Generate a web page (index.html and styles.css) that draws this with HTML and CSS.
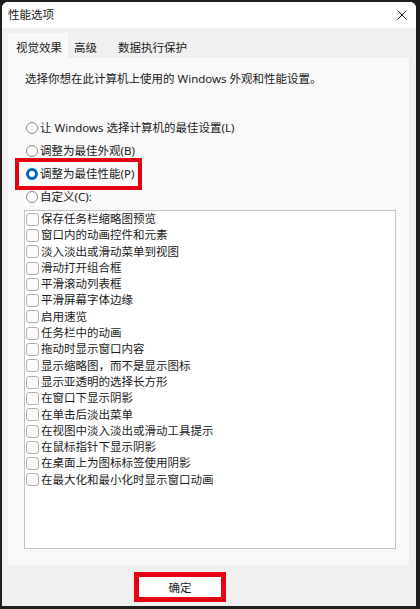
FILE: index.html
```html
<!DOCTYPE html>
<html lang="zh-CN">
<head>
    <meta charset="UTF-8">
    <meta name="viewport" content="width=device-width, initial-scale=1.0">
    <title>性能选项</title>
    <link rel="stylesheet" href="styles.css">
</head>
<body>
    <div class="window">
        <div class="titlebar">
            <span class="title">性能选项</span>
            <svg class="close" width="10" height="10" viewBox="0 0 10 10">
                <path d="M0.5 0.5 L9.5 9.5 M9.5 0.5 L0.5 9.5" stroke="#2b2b2b" stroke-width="1" fill="none"/>
            </svg>
        </div>
        <div class="tabs">
            <div class="tab active">视觉效果</div>
            <div class="tab second">高级</div>
            <div class="tab third">数据执行保护</div>
        </div>
        <div class="panel">
            <p class="intro">选择你想在此计算机上使用的 Windows 外观和性能设置。</p>
            <div class="options">
                <label class="option"><span class="radio"></span>让 Windows 选择计算机的最佳设置(L)</label>
                <label class="option"><span class="radio"></span>调整为最佳外观(B)</label>
                <label class="option marked"><span class="radio checked"></span>调整为最佳性能(P)</label>
                <label class="option"><span class="radio"></span>自定义(C):</label>
            </div>
            <ul class="effects">
                <li><span class="check"></span>保存任务栏缩略图预览</li>
                <li><span class="check"></span>窗口内的动画控件和元素</li>
                <li><span class="check"></span>淡入淡出或滑动菜单到视图</li>
                <li><span class="check"></span>滑动打开组合框</li>
                <li><span class="check"></span>平滑滚动列表框</li>
                <li><span class="check"></span>平滑屏幕字体边缘</li>
                <li><span class="check"></span>启用速览</li>
                <li><span class="check"></span>任务栏中的动画</li>
                <li><span class="check"></span>拖动时显示窗口内容</li>
                <li><span class="check"></span>显示缩略图，而不是显示图标</li>
                <li><span class="check"></span>显示亚透明的选择长方形</li>
                <li><span class="check"></span>在窗口下显示阴影</li>
                <li><span class="check"></span>在单击后淡出菜单</li>
                <li><span class="check"></span>在视图中淡入淡出或滑动工具提示</li>
                <li><span class="check"></span>在鼠标指针下显示阴影</li>
                <li><span class="check"></span>在桌面上为图标标签使用阴影</li>
                <li><span class="check"></span>在最大化和最小化时显示窗口动画</li>
            </ul>
        </div>
        <div class="footer">
            <button type="button" class="ok">确定</button>
        </div>
    </div>
</body>
</html>
```

FILE: styles.css
```css
body {
    margin: 0;
    background: #1e1e1e;
    font-family: "Noto Sans", "Noto Sans CJK SC", sans-serif;
    font-size: 11.5px;
    color: #1b1b1b;
}
.window {
    width: 418px;
    height: 608px;
    box-sizing: border-box;
    border: 2px solid #1f1f1f;
    border-radius: 8px 8px 0 0;
    background: #f0f0f0;
    overflow: hidden;
}
.titlebar {
    height: 26px;
    line-height: 26px;
    background: #ffffff;
    display: flex;
    align-items: center;
    justify-content: space-between;
    padding: 0 9px 0 6px;
}
.close {
    display: block;
}
.tabs {
    display: flex;
    margin: 5px 0 0 6px;
}
.tab {
    height: 25px;
    box-sizing: border-box;
    padding: 7px 10px 2px 6px;
    line-height: 16px;
}
.tab.active {
    background: #f9f9f9;
    padding: 7px 6px 2px 8px;
}
.tab.third {
    padding-left: 11px;
}
.panel {
    margin: 0 6px;
    background: #f9f9f9;
    border-right: 1px solid #ebebeb;
    padding: 13px 0 16px 17px;
}
.intro {
    margin: 0;
    line-height: 16px;
}
.options {
    display: flex;
    flex-direction: column;
    align-items: flex-start;
    margin-top: 29px;
}
.option {
    display: inline-flex;
    align-items: center;
    height: 23px;
    line-height: 23px;
    position: relative;
}
.radio {
    width: 12px;
    height: 12px;
    box-sizing: border-box;
    border: 1px solid #8a8a8a;
    border-radius: 50%;
    background: #fff;
    margin: 0 2px 0 1px;
}
.radio.checked {
    border: 3.5px solid #0067c0;
}
.option.marked::after {
    content: "";
    position: absolute;
    left: -10px;
    right: -8px;
    top: -4px;
    bottom: -5px;
    border: 4px solid #e50012;
}
.effects {
    list-style: none;
    margin: 2px 0 0 -1px;
    padding: 0;
    width: 372px;
    height: 339px;
    box-sizing: border-box;
    border: 1px solid #c4c4c4;
    background: #ffffff;
}
.effects li {
    display: flex;
    align-items: center;
    height: 16.3px;
    line-height: 16.3px;
    white-space: nowrap;
}
.check {
    width: 13px;
    height: 13px;
    box-sizing: border-box;
    border: 1px solid #b0b0b0;
    border-radius: 3px;
    background: #fbfbfb;
    margin: 0 2px 0 1px;
}
.footer {
    padding: 12px 0 0 137px;
}
.ok {
    display: block;
    width: 82px;
    height: 20px;
    padding: 0;
    border: none;
    background: #ffffff;
    font-family: inherit;
    font-size: 11.5px;
    color: #1b1b1b;
    outline: 5px solid #e50012;
}
```
